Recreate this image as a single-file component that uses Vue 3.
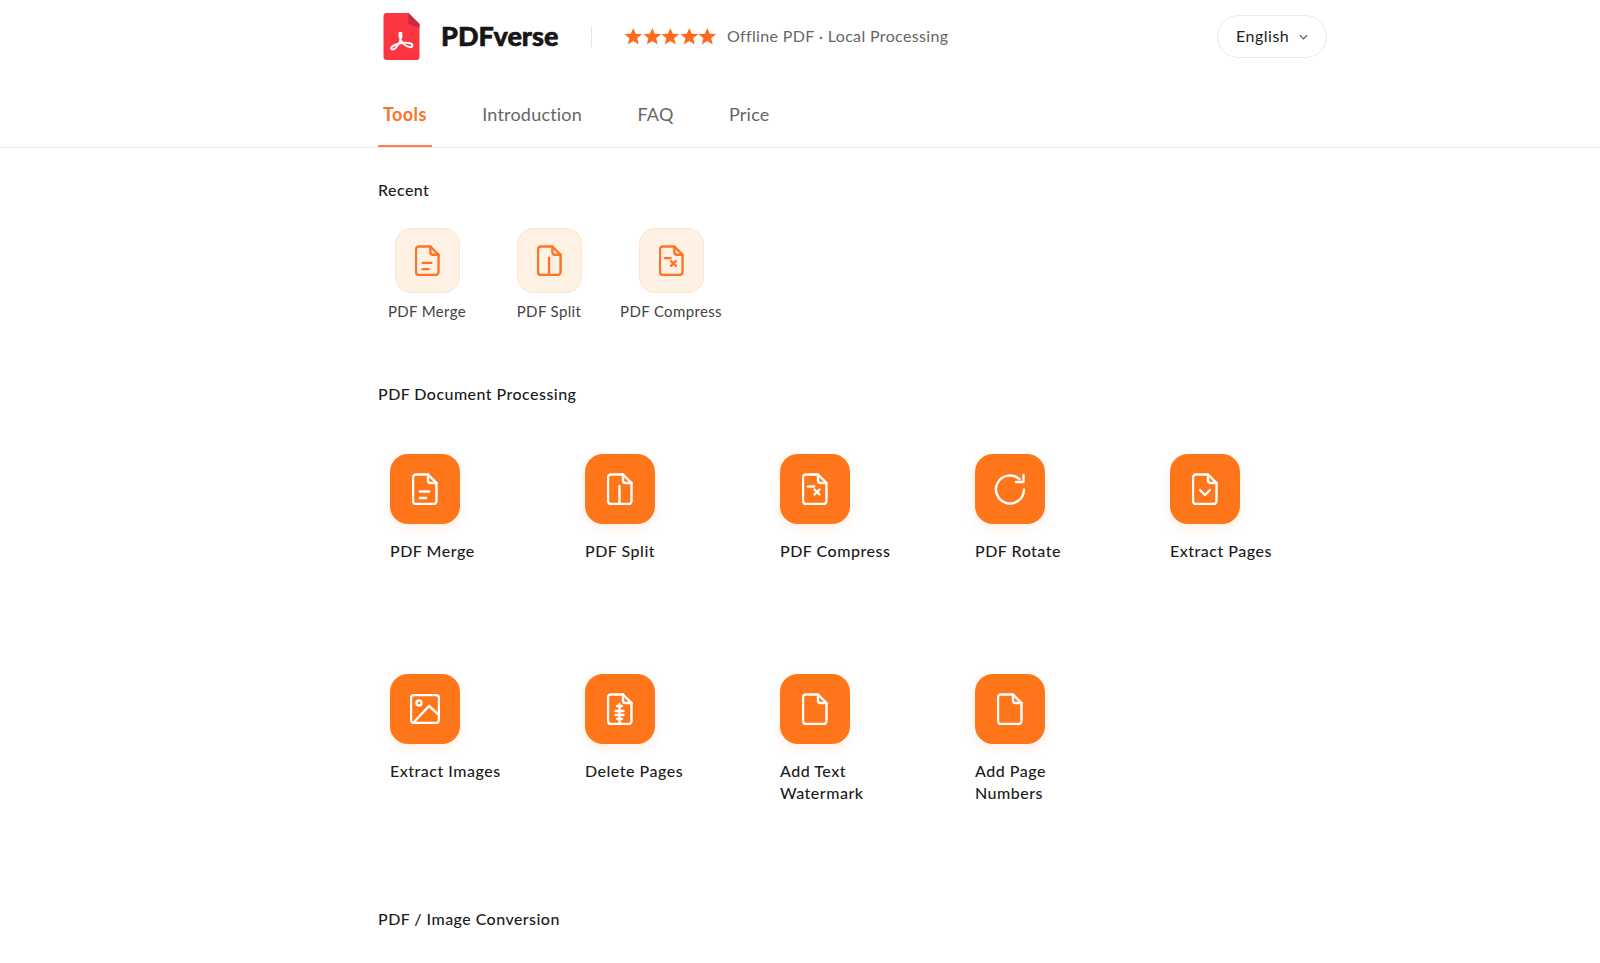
<template>
  <div class="page">
    <header class="top">
      <div class="brand">
        <svg class="logo" viewBox="0 0 36 47">
          <path d="M3 0H25L36 11V44a3 3 0 0 1-3 3H3a3 3 0 0 1-3-3V3a3 3 0 0 1 3-3z" fill="#fb3640" />
          <path d="M25 0L36 11V15L25 11z" fill="#c92a42" />
          <path
            d="M18 20c-1.600 0-2.400 1.100-2.100 2.800.4 2.500 1.300 4.400 2.500 6.100 1.300 1.800 3 3.300 5 4.300 1.800.9 4.300 1.300 5.200.2.900-1.200-.2-2.700-2.200-3.100-3.600-.8-7.400-.6-10.900.2-3 .7-5.500 1.900-7 3.300-1.100 1-1 2.300.2 2.600 1.500.3 3-.8 4.200-2.300 2.400-2.900 4.300-6.900 5-10.500.3-1.900-.4-3.600-1.900-3.600z"
            fill="none" stroke="#fff" stroke-width="2" stroke-linejoin="round" />
        </svg>
        <span class="brand-name">PDFverse</span>
      </div>
      <span class="divider"></span>
      <div class="stars">
        <svg v-for="n in 5" :key="n" class="star" viewBox="0 0 20 20">
          <polygon points="10,1 12.600,7.200 19.500,7.600 14.200,12 15.900,18.800 10,15.100 4.100,18.800 5.800,12 .5,7.600 7.400,7.200" fill="#ff6a21" />
        </svg>
      </div>
      <span class="slogan">Offline PDF · Local Processing</span>
      <button class="lang">
        <span class="lang-name">English</span>
        <svg class="chevron" viewBox="0 0 10 6">
          <path d="M1 1l4 4 4-4" fill="none" stroke="#555" stroke-width="1.300" />
        </svg>
      </button>
    </header>

    <nav class="tabs">
      <a v-for="(tab, i) in tabs" :key="tab" class="tab" :class="{ active: i === 0 }">{{ tab }}</a>
    </nav>

    <main class="content">
      <h2 class="section-title recent-title">Recent</h2>
      <div class="recent">
        <div v-for="tool in recentTools" :key="tool.name" class="recent-item">
          <div class="recent-icon">
            <svg class="doc-small" :viewBox="tool.box" fill="none" stroke="#ff7324" stroke-width="2.500" stroke-linecap="round" stroke-linejoin="round">
              <path v-for="d in tool.paths" :key="d" :d="d" />
            </svg>
          </div>
          <span class="recent-name">{{ tool.name }}</span>
        </div>
      </div>

      <h2 class="section-title doc-title">PDF Document Processing</h2>
      <div class="tools">
        <div v-for="tool in docTools" :key="tool.name" class="tool">
          <div class="tool-icon">
            <svg :width="tool.w" :height="tool.h" :viewBox="tool.box" fill="none" stroke="#fff" stroke-width="2.400" stroke-linecap="round" stroke-linejoin="round">
              <path v-for="d in tool.paths" :key="d" :d="d" />
              <circle v-if="tool.dot" cx="9" cy="9" r="2.500" />
            </svg>
          </div>
          <span class="tool-name">{{ tool.name }}</span>
        </div>
      </div>

      <h2 class="section-title conv-title">PDF / Image Conversion</h2>
    </main>
  </div>
</template>

<script setup>
const tabs = ['Tools', 'Introduction', 'FAQ', 'Price']

// 문서 아이콘 외곽선 + 접힌 모서리
const sheet = 'M4 1.500H16L24.500 10V28a3 3 0 0 1-3 3H4a3 3 0 0 1-3-3V4.500a3 3 0 0 1 3-3z'
const fold = 'M16 1.500V7.500a2.500 2.500 0 0 0 2.500 2.500H24.500'

const docBox = '0 0 26 32'
const merge = [sheet, fold, 'M8 18.500H17', 'M8 25H14']
const split = [sheet, fold, 'M12.500 13V30']
const compress = [sheet, fold, 'M6 13.500H12', 'M12.500 16.500L17.500 21.500', 'M17.500 16.500L12.500 21.500']

const recentTools = [
  { name: 'PDF Merge', box: docBox, paths: merge },
  { name: 'PDF Split', box: docBox, paths: split },
  { name: 'PDF Compress', box: docBox, paths: compress }
]

const docTools = [
  { name: 'PDF Merge', w: 26, h: 32, box: docBox, paths: merge },
  { name: 'PDF Split', w: 26, h: 32, box: docBox, paths: split },
  { name: 'PDF Compress', w: 26, h: 32, box: docBox, paths: compress },
  {
    name: 'PDF Rotate', w: 32, h: 32, box: '0 0 32 32',
    paths: ['M30 16.500A14 14 0 1 1 25.500 6.200', 'M29.500 2V9H22']
  },
  { name: 'Extract Pages', w: 26, h: 32, box: docBox, paths: [sheet, fold, 'M8 17L13 22L18 17'] },
  {
    name: 'Extract Images', w: 30, h: 30, box: '0 0 30 30', dot: true,
    paths: ['M4 1H26a3 3 0 0 1 3 3V26a3 3 0 0 1-3 3H4a3 3 0 0 1-3-3V4a3 3 0 0 1 3-3z', 'M4 28L19 12L29 21']
  },
  {
    name: 'Delete Pages', w: 26, h: 32, box: docBox,
    paths: [sheet, fold, 'M12.500 11V31', 'M10 13H15', 'M8.500 18H16.500', 'M8.500 22H16.500', 'M10 26H15']
  },
  { name: 'Add Text Watermark', w: 26, h: 32, box: docBox, paths: [sheet, fold] },
  { name: 'Add Page Numbers', w: 26, h: 32, box: docBox, paths: [sheet, fold] }
]
</script>

<style scoped>
.page {
  height: 963px;
  overflow: hidden;
  background: #fff;
  font-family: Lato, "Open Sans", sans-serif;
  color: #1c1c1c;
}

.top {
  display: flex;
  align-items: center;
  height: 73px;
  padding: 0 273px 0 383px;
}

.brand {
  display: flex;
  align-items: center;
}

.logo {
  width: 37px;
  height: 47px;
  margin-right: 21px;
}

.brand-name {
  width: 128px;
  margin-bottom: 2px;
  font-size: 27px;
  font-weight: 900;
  color: #161616;
  -webkit-text-stroke: .6px #161616;
}

.divider {
  width: 1px;
  height: 21px;
  background: #e8e5de;
  margin: 0 32px 0 22px;
}

.stars {
  display: flex;
  margin-right: 10px;
}

.star {
  width: 18.600px;
  height: 18.600px;
}

.slogan {
  margin-bottom: 2px;
  font-size: 16px;
  letter-spacing: .35px;
  color: #666;
}

.lang {
  display: flex;
  align-items: center;
  justify-content: space-between;
  margin-left: auto;
  width: 110px;
  height: 43px;
  padding: 0 18px;
  border: 1px solid #eeeadf;
  border-radius: 22px;
  background: #fff;
  font: inherit;
  font-size: 16px;
  letter-spacing: .5px;
  color: #1c1c1c;
}

.lang-name {
  margin-bottom: 2px;
}

.chevron {
  width: 9px;
  height: 6px;
}

.tabs {
  display: flex;
  gap: 45.500px;
  height: 75px;
  padding-left: 378px;
  border-bottom: 1px solid #ece6da;
  box-sizing: border-box;
}

.tab {
  display: flex;
  align-items: center;
  height: 74px;
  padding: 10px 5px 0;
  box-sizing: border-box;
  font-size: 18px;
  letter-spacing: .2px;
  color: #666;
  border-bottom: 2px solid transparent;
}

.tab.active {
  font-weight: 700;
  color: #ff7324;
  letter-spacing: .4px;
  border-bottom-color: #ff7f50;
}

.content {
  padding-left: 378px;
}

.section-title {
  margin: 0;
  font-size: 16px;
  font-weight: 500;
  line-height: 22px;
  letter-spacing: .45px;
  color: #1c1c1c;
}

.recent-title {
  margin-top: 31px;
}

.recent {
  display: grid;
  grid-template-columns: repeat(3, 122px);
  margin: 27px 0 0 -12px;
}

.recent-item {
  display: flex;
  flex-direction: column;
  align-items: center;
}

.recent-icon {
  display: flex;
  align-items: center;
  justify-content: center;
  width: 65px;
  height: 65px;
  border: 1px solid #fde4cf;
  border-radius: 16px;
  background: #fff1e4;
  box-sizing: border-box;
}

.doc-small {
  width: 25px;
  height: 31px;
}

.recent-name {
  margin-top: 8px;
  font-size: 15px;
  line-height: 20px;
  letter-spacing: .35px;
  color: #444;
}

.doc-title {
  margin-top: 62px;
}

.tools {
  display: grid;
  grid-template-columns: repeat(5, 195px);
  grid-auto-rows: 220px;
  margin: 49px 0 0 12px;
}

.tool {
  display: flex;
  flex-direction: column;
  align-items: flex-start;
}

.tool-icon {
  display: flex;
  align-items: center;
  justify-content: center;
  width: 70px;
  height: 70px;
  border-radius: 18px;
  background: #ff7519;
  box-shadow: 0 4px 12px rgba(255, 117, 25, .12);
}

.tool-name {
  margin-top: 16px;
  width: 125px;
  font-size: 16px;
  font-weight: 500;
  line-height: 22px;
  letter-spacing: .5px;
}

.conv-title {
  margin-top: 14px;
}
</style>
